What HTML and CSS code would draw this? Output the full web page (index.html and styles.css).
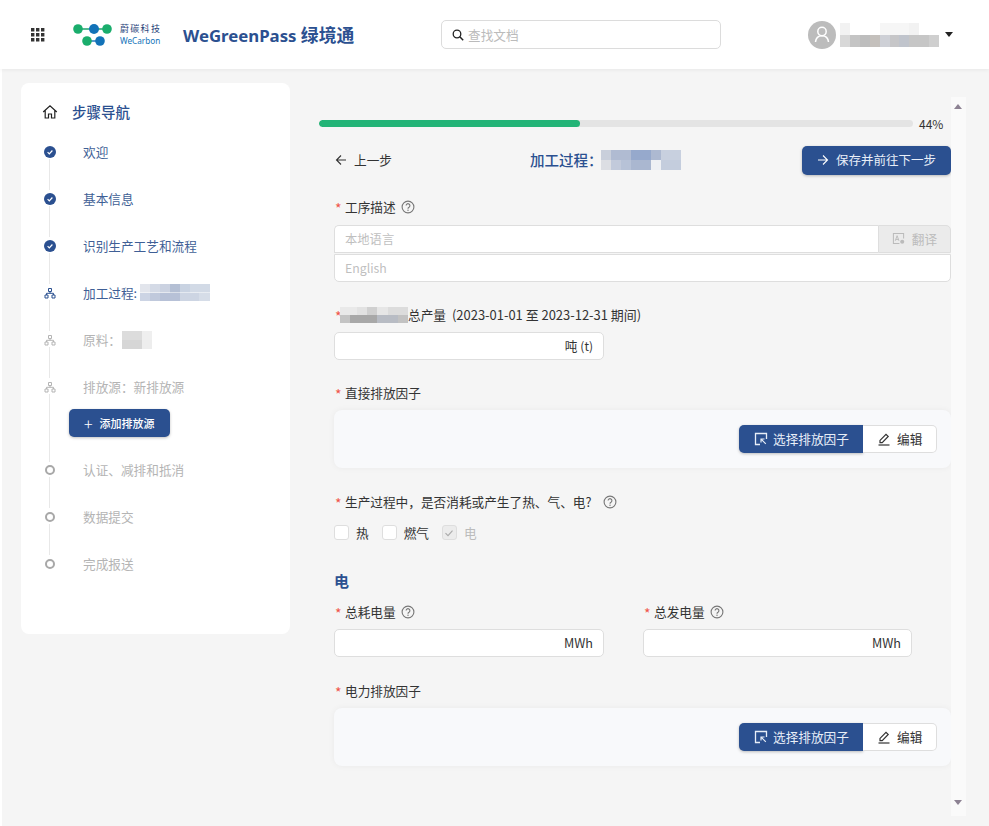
FILE: index.html
```html
<!DOCTYPE html>
<html lang="zh-CN">
<head>
<meta charset="utf-8">
<title>WeGreenPass 绿境通</title>
<link rel="stylesheet" href="styles.css">
</head>
<body>
<svg class="sprite" width="0" height="0" aria-hidden="true">
  <symbol id="help" viewBox="0 0 14 14"><circle cx="7" cy="7" r="5.9" fill="none" stroke="currentColor" stroke-width="1.1"/><path d="M5.1 5.6a1.9 1.9 0 1 1 2.9 1.6c-.7.4-1 .8-1 1.5" fill="none" stroke="currentColor" stroke-width="1.1"/><circle cx="7" cy="10.3" r=".7" fill="currentColor"/></symbol>
  <symbol id="check" viewBox="0 0 12 12"><circle cx="6" cy="6" r="6" fill="#2b5090"/><path d="M3.6 6.2l1.7 1.7 3.1-3.4" fill="none" stroke="#fff" stroke-width="1.2"/></symbol>
  <symbol id="org" viewBox="0 0 12 12"><path d="M4.5 1.500h3v3h-3zM1 8h3v3H1zM8 8h3v3H8zM6 4.500v1.800H2.500V8M6 6.300h3.500V8" fill="none" stroke="currentColor" stroke-width="1"/></symbol>
  <symbol id="pick" viewBox="0 0 14 14"><path d="M6 12.500H1.500v-11h11V7" fill="none" stroke="currentColor" stroke-width="1.300"/><path d="M7 10.500V7h3.500M7 7l4.800 4.800" fill="none" stroke="currentColor" stroke-width="1.200"/></symbol>
  <symbol id="edit" viewBox="0 0 14 14"><path d="M1.500 13h11" stroke="currentColor" stroke-width="1.200"/><path d="M3 10.600V8.400L9 2.300l2.200 2.200-6 6.100z" fill="none" stroke="currentColor" stroke-width="1.200"/></symbol>
</svg>

<header class="topbar">
  <div class="brand">
    <svg class="apps" viewBox="0 0 14 14" width="14" height="14"><path d="M0 0h3.400v3.400H0zM5 0h3.400v3.400H5zM10 0h3.400v3.400H10zM0 5h3.400v3.400H0zM5 5h3.400v3.400H5zM10 5h3.400v3.400H10zM0 10h3.400v3.400H0zM5 10h3.400v3.400H5zM10 10h3.400v3.400H10z" fill="#333"/></svg>
    <svg class="logo-mark" viewBox="0 0 40 24" width="40" height="24">
      <path d="M5 6h33" stroke="#1aa56d" stroke-width="1.400"/>
      <path d="M14 18h13" stroke="#1272b8" stroke-width="1.400"/>
      <circle cx="5" cy="6" r="4.800" fill="#1aad6c"/><circle cx="21" cy="6" r="5" fill="#1272b8"/><circle cx="34" cy="6" r="4.800" fill="#1aad6c"/>
      <circle cx="14" cy="18" r="4.800" fill="#1aad6c"/><circle cx="27" cy="18" r="4.800" fill="#1272b8"/>
    </svg>
    <div class="logo-text"><span class="logo-cn">蔚碳科技</span><span class="logo-en">WeCarbon</span></div>
    <div class="product">WeGreenPass <span>绿境通</span></div>
  </div>
  <div class="search">
    <svg viewBox="0 0 12 12" width="12" height="12"><circle cx="5" cy="5" r="3.800" fill="none" stroke="#222" stroke-width="1.300"/><path d="M7.800 7.800l3.400 3.400" stroke="#222" stroke-width="1.500"/></svg>
    <span>查找文档</span>
  </div>
  <div class="user">
    <div class="avatar"><svg viewBox="0 0 28 28" width="28" height="28"><circle cx="14" cy="10.500" r="4.200" fill="none" stroke="#fff" stroke-width="1.500"/><path d="M7.500 21c.4-4.200 3-6.300 6.500-6.300s6.100 2.100 6.500 6.300" fill="none" stroke="#fff" stroke-width="1.500"/></svg></div>
    <div class="mosaic mosaic-user"></div>
    <span class="caret"></span>
  </div>
</header>

<div class="layout">
  <aside class="sidebar">
    <div class="nav-title">
      <svg viewBox="0 0 16 16" width="16" height="16"><path d="M1.200 8L8 1.800 14.800 8M3.200 6.500V14h3.300v-4h3v4h3.300V6.500" fill="none" stroke="#222" stroke-width="1.200"/></svg>
      <span>步骤导航</span>
    </div>
    <div class="step done"><svg class="ic12" width="12" height="12"><use href="#check"/></svg><span>欢迎</span></div>
    <div class="step done"><svg class="ic12" width="12" height="12"><use href="#check"/></svg><span>基本信息</span></div>
    <div class="step done"><svg class="ic12" width="12" height="12"><use href="#check"/></svg><span>识别生产工艺和流程</span></div>
    <div class="step done"><svg class="ic12" width="12" height="12"><use href="#org"/></svg><span>加工过程:</span><div class="mosaic mosaic-side1"></div></div>
    <div class="step todo"><svg class="ic12" width="12" height="12"><use href="#org"/></svg><span>原料：</span><div class="mosaic mosaic-side2"></div></div>
    <div class="step todo"><svg class="ic12" width="12" height="12"><use href="#org"/></svg><span>排放源：新排放源</span></div>
    <div class="add-row"><button class="add-btn"><span class="plus">+</span>添加排放源</button></div>
    <div class="step todo"><i class="ring"></i><span>认证、减排和抵消</span></div>
    <div class="step todo"><i class="ring"></i><span>数据提交</span></div>
    <div class="step todo last"><i class="ring"></i><span>完成报送</span></div>
  </aside>

  <main class="pane">
    <div class="content">
      <div class="progress">
        <div class="track"><div class="fill"></div></div>
        <span class="pct">44%</span>
      </div>
      <div class="form">
        <div class="toolbar">
          <a class="back"><svg viewBox="0 0 12 12" width="12" height="12"><path d="M11 6H1.500M6 1.500L1.500 6 6 10.500" fill="none" stroke="#333" stroke-width="1.100"/></svg>上一步</a>
          <div class="page-title"><span>加工过程：</span><div class="mosaic mosaic-title"></div></div>
          <button class="btn-primary save"><svg viewBox="0 0 12 12" width="12" height="12"><path d="M1 6h9.500M6 1.500L10.500 6 6 10.500" fill="none" stroke="#fff" stroke-width="1.100"/></svg>保存并前往下一步</button>
        </div>

        <div class="label l-first"><b>*</b>工序描述<svg class="help" width="14" height="14"><use href="#help"/></svg></div>
        <div class="translate-group">
          <div class="input-row">
            <div class="input grow ph top-left">本地语言</div>
            <button class="translate"><svg viewBox="0 0 14 14" width="13" height="13"><path d="M8 12.500H1.500v-11h11V7" fill="none" stroke="#bbb" stroke-width="1.100"/><path d="M3.500 9.500L5.500 4l2 5.500M4.200 8h2.600" fill="none" stroke="#bbb"/><circle cx="11" cy="10.500" r="2.200" fill="#bbb"/></svg>翻译</button>
          </div>
          <div class="input ph bottom">English</div>
        </div>

        <div class="label l-b"><b>*</b><div class="mosaic mosaic-label"></div><span>总产量</span><span class="period">(2023-01-01 至 2023-12-31 期间)</span></div>
        <div class="input unit w269 m7">吨 <small>(t)</small></div>

        <div class="label l-b"><b>*</b>直接排放因子</div>
        <div class="factor m7">
          <button class="btn-primary pick"><svg width="14" height="14"><use href="#pick"/></svg>选择排放因子</button><button class="edit"><svg width="14" height="14"><use href="#edit"/></svg>编辑</button>
        </div>

        <div class="label l-c"><b>*</b>生产过程中，是否消耗或产生了热、气、电?<svg class="help help-far" width="14" height="14"><use href="#help"/></svg></div>
        <div class="checks">
          <label class="chk"><i class="box"></i>热</label>
          <label class="chk"><i class="box"></i>燃气</label>
          <label class="chk off"><i class="box tick"><svg viewBox="0 0 12 12" width="12" height="12"><path d="M2.500 6.200L5 8.700l4.500-5" fill="none" stroke="#aaa" stroke-width="1.100"/></svg></i>电</label>
        </div>

        <h3 class="section">电</h3>
        <div class="two">
          <div>
            <div class="label"><b>*</b>总耗电量<svg class="help" width="14" height="14"><use href="#help"/></svg></div>
            <div class="input unit m7">MWh</div>
          </div>
          <div>
            <div class="label"><b>*</b>总发电量<svg class="help" width="14" height="14"><use href="#help"/></svg></div>
            <div class="input unit m7">MWh</div>
          </div>
        </div>

        <div class="label l-last"><b>*</b>电力排放因子</div>
        <div class="factor m7">
          <button class="btn-primary pick"><svg width="14" height="14"><use href="#pick"/></svg>选择排放因子</button><button class="edit"><svg width="14" height="14"><use href="#edit"/></svg>编辑</button>
        </div>
      </div>
    </div>
    <div class="scrollbar"><i class="up"></i><i class="down"></i></div>
  </main>
</div>
</body>
</html>
```

FILE: styles.css
```css
* { box-sizing: border-box; }
html, body { margin: 0; height: 100%; }
body {
  background: #f5f5f5;
  color: #333;
  font: 12.670px/20px "Noto Sans CJK SC", "Noto Sans", sans-serif;
  overflow: hidden;
}
.sprite { position: absolute; }
button { font: inherit; cursor: pointer; }

/* top bar */
.topbar {
  height: 69px;
  background: #fff;
  display: flex;
  align-items: center;
  box-shadow: 0 1px 4px rgba(0, 0, 0, .06);
  position: relative;
}
.brand { display: flex; align-items: center; width: 441px; padding-left: 31px; }
.apps { margin-right: 28px; }
.logo-mark { margin-right: 7px; margin-top: 1px; }
.logo-text { display: flex; flex-direction: column; width: 41px; margin-top: 1px; }
.logo-cn { font-size: 9px; line-height: 12px; color: #1f3f78; letter-spacing: 1.300px; white-space: nowrap; }
.logo-en { font: 8.200px/12px "Noto Sans", sans-serif; color: #1272b8; white-space: nowrap; }
.product {
  margin-left: 22px;
  font: 700 16.800px/24px "Noto Sans", "Noto Sans CJK SC", sans-serif;
  color: #2b5090;
  white-space: nowrap;
}
.product span { font-size: 17.800px; font-family: "Noto Sans CJK SC", sans-serif; }
.search {
  width: 280px;
  height: 29px;
  border: 1px solid #dcdcdc;
  border-radius: 5px;
  display: flex;
  align-items: center;
  gap: 4px;
  padding-left: 10px;
  color: #bbb;
}
.user { display: flex; align-items: center; margin-left: 87px; }
.avatar { width: 28px; height: 28px; border-radius: 50%; background: #bcbcbc; }
.avatar svg { display: block; }
.caret {
  margin-left: 6px;
  border: 4.500px solid transparent;
  border-top: 5px solid #222;
  border-bottom: 0;
}

/* pixelated redactions */
.mosaic { background-repeat: no-repeat; background-size: 100% 50%; background-position: top, bottom; }
.mosaic-user {
  width: 99px; height: 24px; margin-left: 4px;
  background-image:
    linear-gradient(90deg, #f2f2f2 0 10%, #fff 10% 40%, #f6f6f6 40% 70%, #f2f2f2 70% 80%, #fff 80%),
    linear-gradient(90deg, #d8d8d8 0 10%, #c4c4c4 10% 20%, #bdbdbd 20% 30%, #c4c0bc 30% 40%, #ced0d6 40% 50%, #c6c6c8 50% 60%, #c0c4cc 60% 70%, #c6c6c6 70% 90%, #cfcfcf 90%);
}
.mosaic-title {
  width: 80px; height: 20px; margin-left: -2px;
  background-image:
    linear-gradient(90deg, #c9cfdb 0 12%, #b0bbd2 12% 37%, #96a9cc 37% 62%, #adb9d1 62% 75%, #c8d0df 75%),
    linear-gradient(90deg, #dcdee3 0 12%, #c2cadb 12% 25%, #b7c2d7 25% 37%, #aab7d0 37% 62%, #eef0f4 62% 75%, #c4cddd 75%);
}
.mosaic-side1 {
  width: 70px; height: 17px; margin-left: 3px;
  background-image:
    linear-gradient(90deg, #e2e5ec 0 14%, #d4dae6 14% 28%, #cbd2e1 28% 43%, #b4bfd4 43% 57%, #c9d3e2 57% 71%, #d2dae6 71% 100%),
    linear-gradient(90deg, #ccd4e4 0 14%, #c0c9dc 14% 28%, #b7c1d7 28% 57%, #cdd5e3 57% 85%, #d6dde8 85%);
}
.mosaic-side2 {
  width: 30px; height: 18px; margin-left: 1px;
  background-image:
    linear-gradient(90deg, #dcdcdc 0 66%, #efefef 66%),
    linear-gradient(90deg, #d6d6d6 0 66%, #ededed 66%);
}
.mosaic-label {
  width: 68px; height: 16px; flex: none; margin-left: -5px;
  background-image:
    linear-gradient(90deg, #e9e9e9 0 25%, #e2e2e2 25% 40%, #d0d0d0 40% 55%, #e6e6e6 55% 70%, #dcdcdc 70%),
    linear-gradient(90deg, #c4c4c4 0 15%, #a8a8a8 15% 55%, #b8bcc4 55% 85%, #c2c2c2 85%);
}

/* page layout */
.layout {
  display: flex;
  align-items: flex-start;
  padding: 14px 0 0 19px;
  border-left: 2px solid #fff;
  height: 757px;
}
.sidebar {
  width: 269px;
  height: 551px;
  flex: none;
  background: #fff;
  border-radius: 8px;
  padding-top: 16px;
}
.nav-title {
  display: flex;
  align-items: center;
  height: 26px;
  margin-bottom: 3px;
  padding-left: 21px;
  gap: 14px;
  font-size: 14.500px;
  font-weight: 500;
  color: #2b5090;
}
.step {
  position: relative;
  height: 47px;
  display: flex;
  align-items: center;
  padding-left: 23px;
  white-space: nowrap;
}
.step > svg, .step > .ring { flex: none; margin-right: 27px; }
.step::after {
  content: "";
  position: absolute;
  left: 28px;
  top: 31px;
  height: 31px;
  width: 1px;
  background: #e8e8e8;
}
.step.last::after { display: none; }
.step.done { color: #2b5090; }
.step.done > span { color: #3f5f96; }
.step.todo { color: #b4b4b4; }
.ring {
  width: 10px;
  height: 10px;
  margin-left: 1px;
  margin-right: 28px !important;
  border-radius: 50%;
  border: 2.500px solid #a8a8a8;
  background: #fff;
}
.add-row { height: 37px; padding-left: 48px; position: relative; }
.add-row::before {
  content: "";
  position: absolute;
  left: 28px;
  top: 0;
  bottom: -16px;
  width: 1px;
  background: #e8e8e8;
}
.add-btn {
  height: 28px;
  width: 101px;
  margin-top: -1px;
  padding: 0 0 0 15px;
  display: flex;
  align-items: center;
  border: 0;
  border-radius: 5px;
  background: #2b5090;
  color: #fff;
  font-size: 11px;
  font-weight: 500;
  box-shadow: 0 1px 3px rgba(0, 0, 0, .25);
  position: relative;
}
.plus { font-size: 16px; font-weight: 300; margin-right: 7px; }

/* right pane */
.pane { display: flex; margin-left: 30px; margin-top: 14px; height: 719px; width: 646px; }
.content { width: 631px; }
.progress { display: flex; align-items: center; height: 17px; margin-top: 18px; margin-left: -1px; }
.track { width: 594px; height: 7px; border-radius: 4px; background: #e4e4e4; overflow: hidden; }
.fill { width: 44%; height: 100%; border-radius: 4px; background: #23b477; }
.pct { margin-left: 6px; font-size: 12px; }
.form { padding-left: 14px; }
.toolbar { display: flex; align-items: center; height: 29px; margin-top: 14px; }
.back { display: flex; align-items: center; gap: 7px; width: 196px; padding-left: 1px; margin-top: -2px; }
.page-title { display: flex; align-items: center; width: 271px; margin-top: -2px; color: #2b5090; font-size: 14.500px; font-weight: 500; }
.btn-primary {
  border: 0;
  background: #2b5090;
  color: #e8eef8;
  display: flex;
  align-items: center;
  box-shadow: 0 1px 3px rgba(0, 0, 0, .25);
}
.save { width: 149px; height: 29px; margin-left: 1px; border-radius: 5px; padding: 0 0 1px 15px; gap: 7px; flex: none; font-size: 12.500px; }

.label { display: flex; align-items: center; height: 20px; }
.label b { color: #f0554a; font-weight: 400; font-size: 14px; width: 11px; padding-left: 1px; margin-top: 2px; flex: none; }
.help { color: #777; margin-left: 5px; }
.help-far { margin-left: 12px; }
.l-first { margin-top: 22px; }
.l-b { margin-top: 23px; }
.l-b span { white-space: nowrap; }
.period { margin-left: 6px; font-size: 12.950px; }
.l-c { margin-top: 24px; }
.l-last { margin-top: 24px; }
.input {
  height: 28px;
  background: #fff;
  border: 1px solid #dedede;
  border-radius: 5px;
  display: flex;
  align-items: center;
  padding: 0 10px;
}
.ph { color: #bfbfbf; font-size: 12.300px; }
.translate-group { margin-top: 8px; }
.input-row { display: flex; }
.grow { flex: 1; }
.top-left { border-radius: 5px 0 0 0; border-right: 0; padding-bottom: 1px; }
.bottom { margin-top: 1px; border-radius: 0 0 5px 5px; }
.translate {
  width: 73px;
  height: 28px;
  flex: none;
  border: 1px solid #dedede;
  border-radius: 0 5px 0 0;
  background: #ebebeb;
  color: #bbb;
  display: flex;
  align-items: center;
  justify-content: center;
  gap: 7px;
  padding: 0 0 1px;
}
.unit { justify-content: flex-end; }
.unit small { font-size: 12px; margin-left: 3px; }
.w269 { width: 270px; }
.m7 { margin-top: 7px; }
.factor {
  height: 58px;
  background: #f8f9fb;
  border-radius: 8px;
  box-shadow: 0 0 6px rgba(0, 0, 0, .05);
  display: flex;
  align-items: center;
  justify-content: flex-end;
  padding-right: 14px;
}
.pick { width: 124px; height: 28px; border-radius: 5px 0 0 5px; padding: 0 0 0 15px; gap: 5px; }
.edit {
  width: 74px;
  height: 28px;
  background: #fff;
  border: 1px solid #dedede;
  border-left: 0;
  border-radius: 0 5px 5px 0;
  color: #333;
  display: flex;
  align-items: center;
  gap: 6px;
  padding: 0 0 0 14px;
}
.checks { display: flex; gap: 13px; height: 15px; margin-top: 13px; }
.chk { display: flex; align-items: center; gap: 7px; }
.box {
  width: 15px;
  height: 15px;
  background: #fff;
  border: 1px solid #dedede;
  border-radius: 3px;
  display: flex;
  align-items: center;
  justify-content: center;
}
.tick { background: #ececec; }
.off { color: #bbb; }
.section { margin: 31px 0 0; height: 20px; font-size: 15px; line-height: 20px; font-weight: 700; color: #2b5090; }
.two { display: grid; grid-template-columns: 270px 269px; column-gap: 39px; margin-top: 11px; }

.scrollbar {
  width: 15px;
  background: #fafafa;
  position: relative;
}
.up, .down {
  position: absolute;
  left: 3px;
  border: 4.500px solid transparent;
}
.up { top: 7px; border-top: 0; border-bottom: 5px solid #8d8293; }
.down { bottom: 11px; border-bottom: 0; border-top: 5px solid #8d8293; }
```
